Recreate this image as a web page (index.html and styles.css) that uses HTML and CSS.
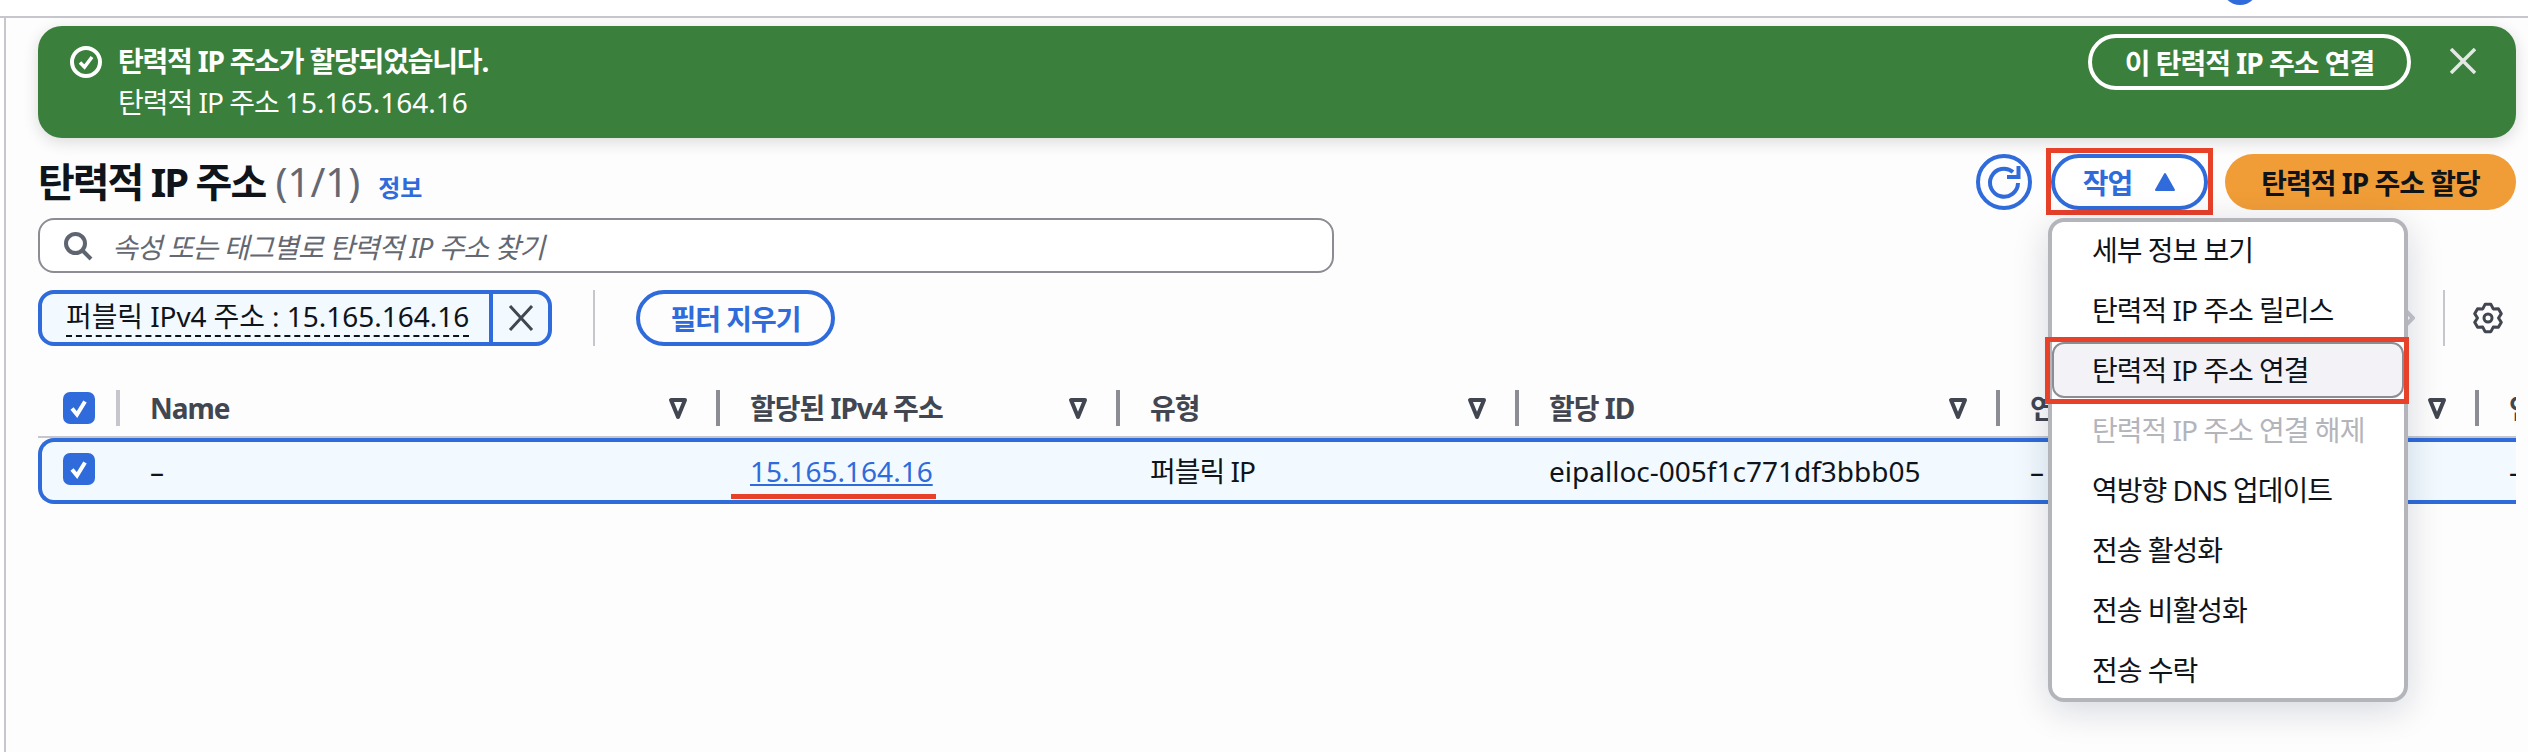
FILE: index.html
```html
<!DOCTYPE html>
<html lang="ko">
<head>
    <meta charset="UTF-8">
    <title>탄력적 IP 주소</title>
    <link rel="stylesheet" href="styles.css">
</head>
<body>
    <div class="topbar"><span class="avatar"></span></div>

    <div class="main">
        <div class="flash">
            <svg class="flash-icon" viewBox="0 0 32 32"><circle cx="16" cy="16" r="14" fill="none" stroke="#fff" stroke-width="4"/><path d="M10 16.5l4.5 4.5 7.5-10" fill="none" stroke="#fff" stroke-width="3.5"/></svg>
            <div class="flash-text">
                <div class="flash-title">탄력적 IP 주소가 할당되었습니다.</div>
                <div class="flash-sub">탄력적 IP 주소 <span class="num">15.165.164.16</span></div>
            </div>
            <button class="btn-flash">이 탄력적 IP 주소 연결</button>
            <svg class="flash-close" viewBox="0 0 26 26"><path d="M1 1l24 24M25 1L1 25" fill="none" stroke="#e4e8e4" stroke-width="3.5"/></svg>
        </div>

        <div class="head">
            <h1>탄력적 IP 주소 <span class="count">(1/1)</span></h1>
            <a class="info">정보</a>
            <div class="actions">
                <button class="btn-refresh">
                    <svg viewBox="0 0 40 40" width="40" height="40"><path d="M29 10A14 14 0 1 0 34 21" fill="none" stroke="#2f6bda" stroke-width="4"/><path d="M23 15h11.500V4" fill="none" stroke="#2f6bda" stroke-width="4"/></svg>
                </button>
                <div class="dropdown">
                    <button class="btn-actions">작업 <svg viewBox="0 0 22 20" width="22" height="20"><path d="M11 2l9 16H2z" fill="#2f6bda" stroke="#2f6bda" stroke-width="2" stroke-linejoin="round"/></svg></button>
                    <span class="mark-actions"></span>
                    <ul class="menu">
                        <li>세부 정보 보기</li>
                        <li>탄력적 IP 주소 릴리스</li>
                        <li class="active">탄력적 IP 주소 연결<span class="mark-item"></span></li>
                        <li class="disabled">탄력적 IP 주소 연결 해제</li>
                        <li>역방향 DNS 업데이트</li>
                        <li>전송 활성화</li>
                        <li>전송 비활성화</li>
                        <li>전송 수락</li>
                    </ul>
                </div>
                <button class="btn-primary">탄력적 IP 주소 할당</button>
            </div>
        </div>

        <div class="search">
            <svg viewBox="0 0 30 30" width="30" height="30"><circle cx="12.5" cy="12.5" r="9.5" fill="none" stroke="#5f6570" stroke-width="4"/><path d="M19.5 19.5l8.5 8.5" stroke="#5f6570" stroke-width="4"/></svg>
            <span>속성 또는 태그별로 탄력적 IP 주소 찾기</span>
        </div>

        <div class="filters">
            <div class="token">
                <span class="token-label"><span class="token-text">퍼블릭 IPv4 주소 : <span class="num">15.165.164.16</span></span></span>
                <span class="token-close"><svg viewBox="0 0 26 26" width="26" height="26"><path d="M2 1l22 24M24 1L2 25" fill="none" stroke="#424650" stroke-width="3"/></svg></span>
            </div>
            <span class="filter-sep"></span>
            <button class="btn-clear">필터 지우기</button>
            <div class="tools">
                <svg class="pager-next" viewBox="0 0 12 20" width="12" height="20"><path d="M2 2l8 8-8 8" fill="none" stroke="#c6c6cd" stroke-width="4"/></svg>
                <svg class="gear" viewBox="0 0 32 32" width="32" height="32"><path d="M13.09 2.31h5.82l2.34 4.6 5.15-.28 2.91 5.04L26.500 16l2.810 4.330-2.910 5.040-5.150-.28-2.340 4.600h-5.820l-2.340-4.600-5.150.28-2.910-5.040L5.500 16l-2.810-4.330 2.910-5.040 5.150.28z" fill="none" stroke="#424650" stroke-width="3" stroke-linejoin="round"/><circle cx="16" cy="16" r="4" fill="none" stroke="#424650" stroke-width="3"/></svg>
            </div>
        </div>

        <div class="table">
            <div class="thead">
                <div class="th th-check"><span class="checkbox"><svg viewBox="0 0 32 32"><path d="M9 16.500l5 6 8-13" fill="none" stroke="#fff" stroke-width="4"/></svg></span></div>
                <div class="th first">Name <svg class="sort" viewBox="0 0 20 24"><path d="M3 4h14l-7 17z" fill="none" stroke="#424650" stroke-width="4" stroke-linejoin="round"/></svg></div>
                <div class="th">할당된 IPv4 주소 <svg class="sort" viewBox="0 0 20 24"><path d="M3 4h14l-7 17z" fill="none" stroke="#424650" stroke-width="4" stroke-linejoin="round"/></svg></div>
                <div class="th">유형 <svg class="sort" viewBox="0 0 20 24"><path d="M3 4h14l-7 17z" fill="none" stroke="#424650" stroke-width="4" stroke-linejoin="round"/></svg></div>
                <div class="th">할당 ID <svg class="sort" viewBox="0 0 20 24"><path d="M3 4h14l-7 17z" fill="none" stroke="#424650" stroke-width="4" stroke-linejoin="round"/></svg></div>
                <div class="th">연결된 인스턴스 ID <svg class="sort" viewBox="0 0 20 24"><path d="M3 4h14l-7 17z" fill="none" stroke="#424650" stroke-width="4" stroke-linejoin="round"/></svg></div>
                <div class="th">연결</div>
            </div>
            <div class="tr">
                <div class="td td-check"><span class="checkbox"><svg viewBox="0 0 32 32"><path d="M9 16.500l5 6 8-13" fill="none" stroke="#fff" stroke-width="4"/></svg></span></div>
                <div class="td">–</div>
                <div class="td"><a class="ip-link num">15.165.164.16</a><span class="mark-ip"></span></div>
                <div class="td">퍼블릭 IP</div>
                <div class="td num">eipalloc-005f1c771df3bbb05</div>
                <div class="td">–</div>
                <div class="td">–</div>
            </div>
        </div>
    </div>
</body>
</html>
```

FILE: styles.css
```css
* {
    margin: 0;
    padding: 0;
    box-sizing: border-box;
}
body {
    background-color: #fff;
    font-family: "Noto Sans", "Noto Sans CJK KR", sans-serif;
    font-size: 28px;
    letter-spacing: -1px; /* hangul in the shot runs tighter than Noto */
    color: #0f141a;
    height: 752px;
    overflow: hidden;
}
button {
    font-family: inherit;
    font-size: 28px;
    font-weight: 700;
    letter-spacing: inherit;
    background: none;
    border: none;
}
.num {
    letter-spacing: 0;
}
.topbar {
    height: 18px;
    border-bottom: 2px solid #c6c6cd;
    display: flex;
    justify-content: flex-end;
    padding-right: 270px;
    overflow: hidden;
}
.avatar {
    display: block;
    width: 36px;
    height: 36px;
    margin-top: -31px;
    border-radius: 50%;
    background-color: #2f6bda;
}
.main {
    height: 734px;
    margin-left: 4px;
    padding: 8px 12px 0 32px;
    border-left: 2px solid #c6c6cd;
    background-color: #fdfdfd;
}

/* green banner */
.flash {
    height: 112px;
    display: flex;
    align-items: flex-start;
    background-color: #3a7f3c;
    border-radius: 24px;
    box-shadow: 0 4px 16px rgba(0, 0, 0, 0.14);
    color: #fff;
    padding: 8px 40px 0 32px;
}
.flash-icon {
    width: 32px;
    height: 32px;
    margin-top: 12px;
    flex-shrink: 0;
}
.flash-text {
    margin-left: 16px;
    flex: 1;
}
.flash-title {
    font-weight: 700;
    line-height: 40px;
    letter-spacing: -1.2px;
    margin-top: 7px;
}
.flash-sub {
    line-height: 40px;
    margin-top: 1px;
}
.btn-flash {
    width: 323px;
    height: 56px;
    border: 4px solid #fff;
    border-radius: 28px;
    color: #fff;
}
.flash-close {
    width: 26px;
    height: 26px;
    margin: 14px 0 0 39px;
    flex-shrink: 0;
}

/* title row */
.head {
    display: flex;
    align-items: center;
    height: 56px;
    margin-top: 16px;
}
h1 {
    font-size: 40px;
    line-height: 56px;
    font-weight: 700;
    letter-spacing: -2px;
}
.count {
    font-weight: 400;
    color: #656871;
    letter-spacing: 0;
    margin-left: 2px;
}
.info {
    font-size: 24px;
    font-weight: 700;
    color: #2f6bda;
    letter-spacing: 0;
    margin: 8px 0 0 18px;
}
.actions {
    margin-left: auto;
    display: flex;
    align-items: center;
}
.btn-refresh {
    width: 56px;
    height: 56px;
    border: 4px solid #2f6bda;
    border-radius: 50%;
    display: flex;
    align-items: center;
    justify-content: center;
}
.dropdown {
    position: relative;
    margin: 0 17px 0 19px;
}
.btn-actions {
    width: 157px;
    height: 56px;
    border: 4px solid #2f6bda;
    border-radius: 28px;
    background-color: #fff;
    color: #2f6bda;
    display: flex;
    align-items: center;
    justify-content: center;
    gap: 22px;
}
.btn-primary {
    width: 291px;
    height: 56px;
    border-radius: 28px;
    background-color: #f09d37;
    color: #0f141a;
}
.mark-actions {
    position: absolute;
    left: -5px;
    top: -6px;
    width: 167px;
    height: 67px;
    border: 5px solid #e8412a;
}
.menu {
    position: absolute;
    z-index: 5;
    left: -3px;
    top: 64px;
    width: 360px;
    height: 484px;
    list-style: none;
    background-color: #fff;
    border: 4px solid #b4b4bb;
    border-radius: 16px;
    box-shadow: 0 8px 36px rgba(0, 20, 60, 0.16);
    display: flex;
    flex-direction: column;
    gap: 4px;
}
.menu li {
    height: 56px;
    line-height: 56px;
    padding-left: 40px;
}
.menu .active {
    position: relative;
    line-height: 52px;
    padding-left: 38px;
    background-color: #f3f3f7;
    border: 2px solid #8c8c94;
    border-radius: 12px;
}
.mark-item {
    position: absolute;
    left: -9px;
    top: -7px;
    right: -7px;
    bottom: -8px;
    border: 5px solid #e8412a;
}
.menu .disabled {
    color: #b4b4bb;
}

/* search and filter */
.search {
    width: 1296px;
    height: 55px;
    margin-top: 8px;
    display: flex;
    align-items: center;
    gap: 19px;
    padding-left: 23px;
    background-color: #fff;
    border: 2px solid #8c8c94;
    border-radius: 16px;
    font-style: italic;
    color: #656871;
}
.filters {
    display: flex;
    align-items: center;
    margin-top: 17px;
    height: 56px;
}
.token {
    width: 514px;
    height: 56px;
    display: flex;
    background-color: #f2faff;
    border: 4px solid #2f6bda;
    border-radius: 16px;
}
.token-label {
    width: 451px;
    padding-left: 24px;
    line-height: 44px;
    letter-spacing: -0.1px;
    border-right: 4px solid #2f6bda;
}
.token-text {
    display: inline-block;
    white-space: nowrap;
    line-height: 38px;
    border-bottom: 2px dashed #0f141a;
}
.token-close {
    flex: 1;
    display: flex;
    align-items: center;
    justify-content: center;
}
.filter-sep {
    width: 2px;
    height: 56px;
    margin: 0 41px;
    background-color: #c6c6cd;
}
.btn-clear {
    width: 199px;
    height: 56px;
    border: 4px solid #2f6bda;
    border-radius: 28px;
    color: #2f6bda;
}
.tools {
    position: relative;
    margin-left: auto;
    width: 73px;
    height: 56px;
    border-left: 2px solid #c6c6cd;
    display: flex;
    align-items: center;
    justify-content: flex-end;
    padding-right: 12px;
}
.pager-next {
    position: absolute;
    left: -42px;
    top: 18px;
}

/* table */
.table {
    margin-top: 44px;
    overflow: hidden;
}
.thead {
    display: grid;
    grid-template-columns: 78px 600px 400px 399px 481px 479px 1fr;
    height: 48px;
    border-bottom: 2px solid #c6c6cd;
}
.th {
    height: 36px;
    display: flex;
    align-items: center;
    justify-content: space-between;
    padding: 0 28px 0 30px;
    border-left: 4px solid #8c8c94;
    font-weight: 700;
    line-height: 36px;
    white-space: nowrap;
    color: #424650;
    overflow: hidden;
}
.th.first {
    border-left: 4px solid #c6c6cd;
}
.th-check {
    border-left: none;
    padding: 0 0 0 25px;
}
.sort {
    width: 20px;
    height: 24px;
    flex-shrink: 0;
}
.checkbox {
    display: block;
    width: 32px;
    height: 32px;
    background-color: #2f6bda;
    border-radius: 7px;
}
.checkbox svg {
    display: block;
}
.tr {
    display: grid;
    grid-template-columns: 74px 600px 400px 399px 481px 479px 1fr;
    height: 66px;
    background-color: #f2faff;
    border: solid #2f6bda;
    border-width: 4px 0 4px 4px;
    border-radius: 16px 0 0 16px;
}
.td {
    position: relative;
    line-height: 58px;
    padding-left: 34px;
    white-space: nowrap;
}
.td-check {
    padding: 11px 0 0 21px;
}
.ip-link {
    color: #2f6bda;
    text-decoration: underline;
}
.mark-ip {
    position: absolute;
    left: 15px;
    top: 52px;
    width: 205px;
    height: 5px;
    background-color: #e8412a;
}
```
